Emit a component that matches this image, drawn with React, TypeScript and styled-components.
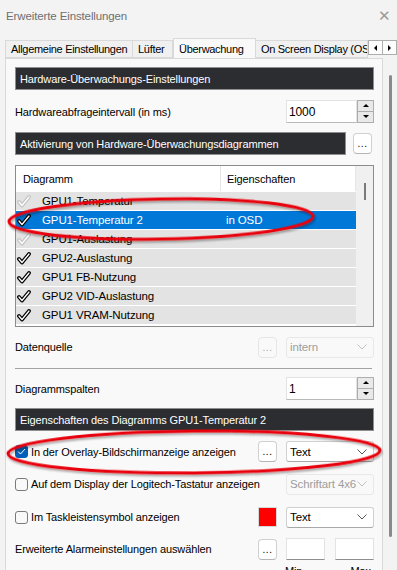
import styled, { createGlobalStyle } from 'styled-components';

const Global = createGlobalStyle`
  body {
    margin: 0;
    background: #f3f3f3;
  }
`;

const Window = styled.div`
  position: relative;
  width: 397px;
  height: 570px;
  overflow: hidden;
  background: #f3f3f3;
  font-family: 'Liberation Sans', Arial, sans-serif;
  font-size: 11px;
  letter-spacing: -0.12px;
  color: #000;
`;

const TitleBar = styled.div`
  height: 37px;
  display: flex;
  align-items: center;
  justify-content: space-between;
  padding: 0 6px 6px 6px;
  box-sizing: border-box;
  color: #6f6f6f;
  font-size: 11.5px;
`;

const Close = styled.span`
  font-size: 15px;
  color: #9a9a9a;
`;

const TabStrip = styled.div`
  display: flex;
  align-items: flex-end;
  height: 21px;
  padding-left: 5px;
`;

const Tab = styled.div<{ active?: boolean; w: number }>`
  width: ${(p) => p.w}px;
  flex-shrink: 0;
  height: ${(p) => (p.active ? 21 : 18)}px;
  box-sizing: border-box;
  border: 1px solid #d9d9d9;
  border-bottom: ${(p) => (p.active ? 'none' : '1px solid #d9d9d9')};
  border-left: ${(p) => (p.active ? '1px solid #d9d9d9' : 'none')};
  background: ${(p) => (p.active ? '#f9f9f9' : '#f0f0f0')};
  display: flex;
  align-items: center;
  padding-left: 5px;
  letter-spacing: -0.3px;
  white-space: nowrap;
  overflow: hidden;
  margin-bottom: ${(p) => (p.active ? -1 : 0)}px;
  &:first-child {
    border-left: 1px solid #d9d9d9;
  }
`;

const TabArrows = styled.div`
  display: flex;
  margin-left: auto;
  margin-bottom: 3px;
`;

const TabArrow = styled.div`
  width: 15px;
  height: 15px;
  box-sizing: border-box;
  border: 1px solid #adadad;
  background: #fdfdfd;
  display: flex;
  align-items: center;
  justify-content: center;
  margin-left: -1px;
`;

const Panel = styled.div`
  display: flex;
  height: 512px;
  overflow: hidden;
`;

const Content = styled.div`
  width: 378px;
  flex-shrink: 0;
  box-sizing: border-box;
  margin-left: 5px;
  background: #f9f9f9;
  border: 1px solid #d9d9d9;
  border-bottom: none;
  padding: 0 8px 0 9px;
  display: flex;
  flex-direction: column;
  & > * {
    flex-shrink: 0;
  }
`;

const ScrollTrack = styled.div`
  flex: 1;
  display: flex;
  justify-content: center;
  padding-top: 17px;
`;

const ScrollThumb = styled.div`
  width: 3px;
  height: 462px;
  background: #8a8a8a;
  border-radius: 2px;
`;

const Header = styled.div<{ mt: number; w?: number }>`
  margin-top: ${(p) => p.mt}px;
  height: 23px;
  width: ${(p) => (p.w ? `${p.w}px` : 'auto')};
  box-sizing: border-box;
  background: #2c2d31;
  border: 1px solid #8e8e8e;
  color: #fff;
  display: flex;
  align-items: center;
  padding-left: 4px;
  white-space: nowrap;
  overflow: hidden;
`;

const Row = styled.div<{ mt: number; h?: number }>`
  margin-top: ${(p) => p.mt}px;
  height: ${(p) => p.h ?? 22}px;
  display: flex;
  align-items: center;
  white-space: nowrap;
`;

const Label = styled.span`
  flex: 1;
`;

const SpinBox = styled.div`
  display: flex;
  height: 23px;
`;

const SpinInput = styled.div`
  width: 71px;
  box-sizing: border-box;
  background: #fff;
  border: 1px solid #e3e3e3;
  border-bottom: 1px solid #b9b9b9;
  padding-left: 2px;
  display: flex;
  align-items: center;
  font-size: 12px;
`;

const SpinButtons = styled.div`
  width: 17px;
  display: flex;
  flex-direction: column;
  box-sizing: border-box;
  border: 1px solid #adadad;
`;

const SpinButton = styled.div`
  flex: 1;
  background: #e9e9e9;
  display: flex;
  align-items: center;
  justify-content: center;
  & + & {
    border-top: 1px solid #adadad;
  }
`;

const Dots = styled.div<{ disabled?: boolean }>`
  width: 19px;
  height: 21px;
  flex-shrink: 0;
  box-sizing: border-box;
  border: 1px solid ${(p) => (p.disabled ? '#e6e6e6' : '#d0d0d0')};
  border-bottom-color: ${(p) => (p.disabled ? '#e6e6e6' : '#b5b5b5')};
  border-radius: 4px;
  background: ${(p) => (p.disabled ? '#f9f9f9' : '#fff')};
  color: ${(p) => (p.disabled ? '#a8a8a8' : '#000')};
  display: flex;
  align-items: flex-end;
  justify-content: center;
  padding-bottom: 4px;
  font-size: 10px;
  line-height: 10px;
  letter-spacing: 0.5px;
`;

const Select = styled.div<{ disabled?: boolean }>`
  width: 88px;
  height: 21px;
  flex-shrink: 0;
  margin-left: 9px;
  box-sizing: border-box;
  border: 1px solid ${(p) => (p.disabled ? '#e8e8e8' : '#d0d0d0')};
  border-bottom-color: ${(p) => (p.disabled ? '#e8e8e8' : '#a8a8a8')};
  border-radius: 3px;
  background: ${(p) => (p.disabled ? '#f9f9f9' : '#fff')};
  color: ${(p) => (p.disabled ? '#9d9d9d' : '#000')};
  display: flex;
  align-items: center;
  justify-content: space-between;
  padding: 0 6px 0 3px;
  font-size: 11.5px;
`;

const ListBox = styled.div`
  margin-top: 10px;
  height: 162px;
  box-sizing: border-box;
  border: 1px solid #8c8c8c;
  background: #fff;
  display: flex;
`;

const ListMain = styled.div`
  flex: 1;
  display: flex;
  flex-direction: column;
`;

const ListHead = styled.div`
  height: 25px;
  flex-shrink: 0;
  display: flex;
  align-items: center;
  border-bottom: 1px solid #fff;
`;

const HeadCell = styled.div<{ w?: number; divider?: boolean }>`
  width: ${(p) => (p.w ? `${p.w}px` : 'auto')};
  flex: ${(p) => (p.w ? 'none' : 1)};
  height: 100%;
  box-sizing: border-box;
  display: flex;
  align-items: center;
  padding-left: ${(p) => (p.divider ? 6 : 7)}px;
  border-left: ${(p) => (p.divider ? '1px solid #e5e5e5' : 'none')};
  border-right: ${(p) => (p.divider ? '1px solid #e5e5e5' : 'none')};
`;

const ListRow = styled.div<{ selected?: boolean }>`
  height: 19px;
  flex-shrink: 0;
  box-sizing: border-box;
  border-bottom: 1px solid #fff;
  background: ${(p) => (p.selected ? '#0078d7' : '#e3e3e3')};
  color: ${(p) => (p.selected ? '#fff' : '#000')};
  display: flex;
  align-items: center;
  white-space: nowrap;
  font-size: 11.5px;
`;

const CheckCell = styled.div`
  width: 26px;
  display: flex;
  align-items: center;
  padding-left: 1px;
  box-sizing: border-box;
`;

const NameCell = styled.div`
  width: 184px;
`;

const ListScroll = styled.div`
  width: 17px;
  background: #f0f0f0;
  display: flex;
  justify-content: center;
  padding-top: 17px;
`;

const ListThumb = styled.div`
  width: 2px;
  height: 17px;
  background: #7a7a7a;
`;

const Separator = styled.div`
  margin-top: 11px;
  height: 1px;
  margin-right: 2px;
  background: #a3a3a3;
`;

const CheckBox = styled.div<{ checked?: boolean }>`
  width: 13px;
  height: 13px;
  flex-shrink: 0;
  box-sizing: border-box;
  border-radius: 3px;
  border: 1px solid ${(p) => (p.checked ? '#005fb8' : '#7a7a7a')};
  background: ${(p) => (p.checked ? '#005fb8' : '#f9f9f9')};
  display: flex;
  align-items: center;
  justify-content: center;
  margin-right: 3px;
`;

const Swatch = styled.div`
  width: 19px;
  height: 20px;
  flex-shrink: 0;
  background: #ff0000;
  border: 1px solid #d8d8d8;
  box-sizing: border-box;
`;

const Field = styled.div`
  width: 39px;
  height: 22px;
  box-sizing: border-box;
  background: #fff;
  border: 1px solid #e3e3e3;
  border-bottom: 1px solid #8e8e8e;
  & + & {
    margin-left: 10px;
  }
`;

const Fields = styled.div`
  display: flex;
  margin-left: 9px;
`;

const Caption = styled.div`
  margin-top: 5px;
  display: flex;
  padding-left: 270px;
  & span + span {
    margin-left: 48px;
  }
`;

const Overlay = styled.svg`
  position: absolute;
  left: 0;
  top: 0;
  pointer-events: none;
`;

const Arrow = ({ dir }: { dir: 'up' | 'down' | 'left' | 'right' }) => {
  const pts = {
    up: '0,4 3,1 6,4',
    down: '0,1 3,4 6,1',
    left: '4,0 1,3 4,6',
    right: '1,0 4,3 1,6',
  }[dir];
  return (
    <svg width="6" height="6" viewBox="0 0 6 6">
      <polygon points={pts} fill="#000" />
    </svg>
  );
};

const Chevron = ({ color = '#555' }: { color?: string }) => (
  <svg width="10" height="6" viewBox="0 0 10 6">
    <polyline points="0.5,0.5 5,5 9.5,0.5" fill="none" stroke={color} strokeWidth="1" />
  </svg>
);

const Tick = ({ faded }: { faded?: boolean }) => (
  <svg width="14" height="13" viewBox="0 0 14 13">
    <path
      d="M2 7 L5 10.5 L12 2"
      fill="none"
      stroke={faded ? '#c4c4c4' : '#000'}
      strokeWidth="3.8"
      strokeLinecap="round"
      strokeLinejoin="round"
    />
    <path
      d="M2 7 L5 10.5 L12 2"
      fill="none"
      stroke="#fff"
      strokeWidth="1.3"
      strokeLinecap="round"
      strokeLinejoin="round"
    />
  </svg>
);

const rows = [
  { name: 'GPU1-Temperatur', faded: true },
  { name: 'GPU1-Temperatur 2', selected: true, props: 'in OSD' },
  { name: 'GPU1-Auslastung', faded: true },
  { name: 'GPU2-Auslastung' },
  { name: 'GPU1 FB-Nutzung' },
  { name: 'GPU2 VID-Auslastung' },
  { name: 'GPU1 VRAM-Nutzung' },
];

const Spin = ({ value }: { value: string }) => (
  <SpinBox>
    <SpinInput>{value}</SpinInput>
    <SpinButtons>
      <SpinButton>
        <Arrow dir="up" />
      </SpinButton>
      <SpinButton>
        <Arrow dir="down" />
      </SpinButton>
    </SpinButtons>
  </SpinBox>
);

const App = () => {
  return (
    <Window>
      <Global />
      <TitleBar>
        <span>Erweiterte Einstellungen</span>
        <Close>✕</Close>
      </TitleBar>
      <TabStrip>
        <Tab w={128}>Allgemeine Einstellungen</Tab>
        <Tab w={40}>Lüfter</Tab>
        <Tab w={83} active>
          Überwachung
        </Tab>
        <Tab w={112}>On Screen Display (OSD)</Tab>
        <TabArrows>
          <TabArrow>
            <Arrow dir="left" />
          </TabArrow>
          <TabArrow>
            <Arrow dir="right" />
          </TabArrow>
        </TabArrows>
      </TabStrip>
      <Panel>
        <Content>
          <Header mt={8}>Hardware-Überwachungs-Einstellungen</Header>
          <Row mt={10} h={23}>
            <Label>Hardwareabfrageintervall (in ms)</Label>
            <Spin value="1000" />
          </Row>
          <Row mt={9} h={23}>
            <Header mt={0} w={331}>
              Aktivierung von Hardware-Überwachungsdiagrammen
            </Header>
            <div style={{ marginLeft: 7 }}>
              <Dots>...</Dots>
            </div>
          </Row>
          <ListBox>
            <ListMain>
              <ListHead>
                <HeadCell w={204}>Diagramm</HeadCell>
                <HeadCell divider>Eigenschaften</HeadCell>
              </ListHead>
              {rows.map((r) => (
                <ListRow key={r.name} selected={r.selected}>
                  <CheckCell>
                    <Tick faded={r.faded} />
                  </CheckCell>
                  <NameCell>{r.name}</NameCell>
                  <span>{r.props}</span>
                </ListRow>
              ))}
            </ListMain>
            <ListScroll>
              <ListThumb />
            </ListScroll>
          </ListBox>
          <Row mt={10} h={20}>
            <Label>Datenquelle</Label>
            <Dots disabled>...</Dots>
            <Select disabled>
              <span>intern</span>
              <Chevron color="#c0c0c0" />
            </Select>
          </Row>
          <Separator />
          <Row mt={8} h={23}>
            <Label>Diagrammspalten</Label>
            <Spin value="1" />
          </Row>
          <Header mt={8}>Eigenschaften des Diagramms GPU1-Temperatur 2</Header>
          <Row mt={10} h={21}>
            <CheckBox checked>
              <svg width="9" height="7" viewBox="0 0 9 7">
                <polyline points="1,3.5 3.5,6 8,1" fill="none" stroke="#fff" strokeWidth="1" />
              </svg>
            </CheckBox>
            <Label>In der Overlay-Bildschirmanzeige anzeigen</Label>
            <Dots>...</Dots>
            <Select>
              <span>Text</span>
              <Chevron />
            </Select>
          </Row>
          <Row mt={11} h={22}>
            <CheckBox />
            <Label>Auf dem Display der Logitech-Tastatur anzeigen</Label>
            <Select disabled>
              <span>Schriftart 4x6</span>
              <Chevron color="#c0c0c0" />
            </Select>
          </Row>
          <Row mt={11} h={22}>
            <CheckBox />
            <Label>Im Taskleistensymbol anzeigen</Label>
            <Swatch />
            <Select>
              <span>Text</span>
              <Chevron />
            </Select>
          </Row>
          <Row mt={10} h={22}>
            <Label>Erweiterte Alarmeinstellungen auswählen</Label>
            <Dots>...</Dots>
            <Fields>
              <Field />
              <Field />
            </Fields>
          </Row>
          <Caption>
            <span>Min</span>
            <span>Max</span>
          </Caption>
        </Content>
        <ScrollTrack>
          <ScrollThumb />
        </ScrollTrack>
      </Panel>
      <Overlay width="397" height="570" viewBox="0 0 397 570">
        <defs>
          <filter id="shade" x="-10%" y="-50%" width="120%" height="200%">
            <feDropShadow dx="1" dy="2" stdDeviation="1.2" floodColor="#000" floodOpacity="0.35" />
          </filter>
        </defs>
        <ellipse
          cx="161"
          cy="219"
          rx="152"
          ry="20"
          transform="rotate(-1 161 219)"
          fill="none"
          stroke="#e8000b"
          strokeWidth="3"
          filter="url(#shade)"
        />
        <ellipse
          cx="194"
          cy="452"
          rx="186"
          ry="21"
          transform="rotate(-0.5 194 452)"
          fill="none"
          stroke="#e8000b"
          strokeWidth="3"
          filter="url(#shade)"
        />
      </Overlay>
    </Window>
  );
};

export default App;
